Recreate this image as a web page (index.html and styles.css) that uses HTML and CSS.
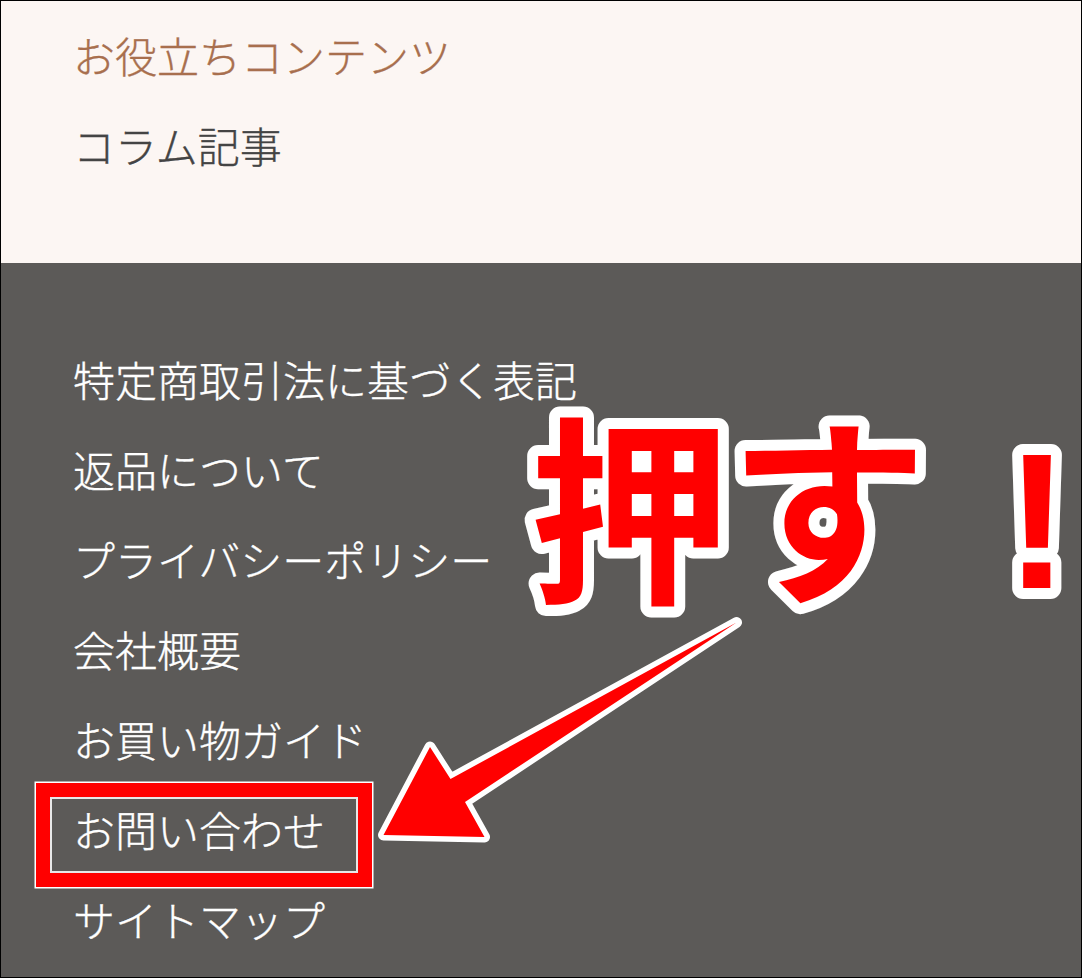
FILE: index.html
```html
<!DOCTYPE html>
<html lang="ja">
<head>
<meta charset="utf-8">
<title>お問い合わせ</title>
<link rel="stylesheet" href="styles.css">
</head>
<body>
<div class="frame">
  <section class="useful">
    <h2 class="useful-title">お役立ちコンテンツ</h2>
    <a class="useful-link">コラム記事</a>
  </section>
  <footer class="footer">
    <ul class="footer-list">
      <li>特定商取引法に基づく表記</li>
      <li>返品について</li>
      <li>プライバシーポリシー</li>
      <li>会社概要</li>
      <li>お買い物ガイド</li>
      <li>お問い合わせ</li>
      <li>サイトマップ</li>
    </ul>
  </footer>
  <div class="highlight"></div>
  <svg class="annotation" viewBox="0 0 1082 978" width="1082" height="978">
    <polygon class="arrow" points="736.5,622.5 465,802 484.5,837 383.5,835 430,747 450.5,779"/>
    <text class="shout" x="530 728" y="588">押す</text>
    <text class="shout shout-mark" x="1005" y="588">!</text>
  </svg>
</div>
</body>
</html>
```

FILE: styles.css
```css
html, body {
  margin: 0;
  padding: 0;
}

body {
  width: 1082px;
  height: 978px;
  overflow: hidden;
  font-family: "Noto Sans CJK JP", "Noto Sans", sans-serif;
}

.frame {
  position: relative;
  box-sizing: border-box;
  width: 1082px;
  height: 978px;
  border: 1px solid #000;
  display: flex;
  flex-direction: column;
}

.useful {
  height: 262px;
  box-sizing: border-box;
  padding: 9px 0 0 72px;
  background: #fcf6f3;
}

.useful-title {
  margin: 0;
  font-size: 42px;
  font-weight: 300;
  line-height: 90px;
  color: #a86f4e;
  -webkit-text-stroke: 0.35px #a86f4e;
}

.useful-link {
  display: block;
  font-size: 42px;
  font-weight: 300;
  line-height: 90px;
  color: #444;
  -webkit-text-stroke: 0.35px #444;
}

.footer {
  flex: 1;
  box-sizing: border-box;
  padding: 71px 0 0 72px;
  background: #5c5a58;
}

.footer-list {
  margin: 0;
  padding: 0;
  list-style: none;
}

.footer-list li {
  font-size: 42px;
  font-weight: 300;
  line-height: 90px;
  color: #fff;
  -webkit-text-stroke: 0.35px #fff;
}

.highlight {
  position: absolute;
  left: 35px;
  top: 782px;
  width: 336px;
  height: 104px;
  box-sizing: border-box;
  border: 14px solid #f00;
  box-shadow: 0 0 0 1.5px #fff, inset 0 0 0 2px #e8e8e8;
}

.annotation {
  position: absolute;
  left: -1px;
  top: -1px;
}

.arrow {
  fill: #f00;
  stroke: #fff;
  stroke-width: 11px;
  stroke-linejoin: round;
  paint-order: stroke fill;
}

.shout {
  font-family: "Noto Sans CJK JP", sans-serif;
  font-size: 200px;
  font-weight: 700;
  fill: #f00;
  stroke: #fff;
  stroke-width: 22px;
  stroke-linejoin: round;
  paint-order: stroke fill;
}

.shout-mark {
  font-family: "Liberation Sans", sans-serif;
  font-size: 193px;
}
```
